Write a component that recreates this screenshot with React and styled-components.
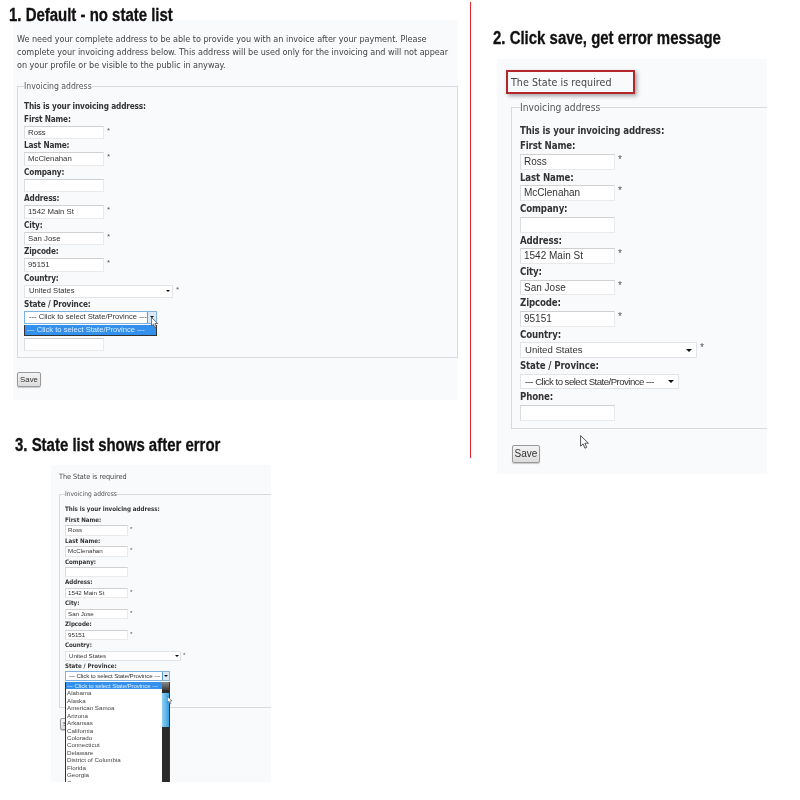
import React from 'react';
import styled, { createGlobalStyle, ThemeProvider } from 'styled-components';

const Global = createGlobalStyle`
  html, body { margin: 0; padding: 0; background: #fff; }
  * { box-sizing: border-box; }
`;

const Page = styled.div`
  display: flex;
  width: 800px;
  height: 800px;
  overflow: hidden;
`;
const LeftColumn = styled.div`
  width: 470px;
  flex: none;
  padding-top: 10px;
`;
const Divider = styled.div`
  width: 1px;
  height: 456px;
  margin-top: 2px;
  flex: none;
  background: #e0262a;
`;
const RightColumn = styled.div`
  flex: 1;
  padding-top: 33px;
  min-width: 0;
`;
const Title = styled.h2`
  margin: ${p => p.$top}px 0 0 ${p => p.$left}px;
  height: 10px;
  font: bold 17.5px/10px "Liberation Sans", Arial, sans-serif;
  color: #111;
  white-space: nowrap;
  -webkit-text-stroke: 0.3px #111;
  transform: scaleX(0.855);
  transform-origin: left center;
  position: relative;
  z-index: 1;
`;
const Panel = styled.section`
  width: ${p => p.theme.panelW}px;
  height: ${p => p.theme.panelH}px;
  margin: ${p => p.$top}px 0 0 ${p => p.$left}px;
  padding-top: ${p => p.theme.panelTop}px;
  background: #f9fafc;
  overflow: hidden;
  position: relative;
  filter: blur(${p => p.theme.blur}px);
  font-family: "DejaVu Sans Condensed", "DejaVu Sans", sans-serif;
  color: #444;
`;
const Intro = styled.p`
  margin: 0 0 0 4px;
  width: 435px;
  font-size: 9px;
  line-height: 13px;
  letter-spacing: -0.02px;
  white-space: nowrap;
`;
const ErrorBox = styled.div`
  width: 129px;
  height: 24px;
  margin-left: 9px;
  padding-left: 3px;
  font-size: 10.6px;
  line-height: 20px;
  letter-spacing: 0.05px;
  border: 2px solid #b3262c;
  box-shadow: 2px 2px 4px rgba(0, 0, 0, 0.35);
`;
const PlainError = styled.div`
  margin-left: 8px;
  font-size: 7.2px;
  line-height: 12px;
`;
const Fieldset = styled.fieldset`
  width: ${p => p.theme.fieldsetW}px;
  margin: ${p => p.theme.fieldsetTop}px 0 0 ${p => p.theme.fieldsetLeft}px;
  padding: ${p => p.theme.fieldsetPadTop}px 0 ${p => p.theme.fieldsetPadBottom}px ${p => p.theme.fieldsetPadLeft}px;
  border: 1px solid #d8dadd;
  min-width: 0;
`;
const Legend = styled.legend`
  padding: 0;
  font-size: ${p => p.theme.legend}px;
  line-height: ${p => p.theme.labelH}px;
  color: #555;
`;
const Heading = styled.div`
  font-size: ${p => p.theme.label}px;
  line-height: ${p => p.theme.labelH}px;
  height: ${p => p.theme.labelH}px;
  font-weight: bold;
  color: #333;
  white-space: nowrap;
  letter-spacing: ${p => p.theme.labelSpacing}px;
`;
const Row = styled.div`
  display: flex;
  align-items: flex-start;
  gap: ${p => p.theme.starGap}px;
  height: ${p => p.theme.fieldH}px;
  position: relative;
`;
const Star = styled.span`
  font: ${p => p.theme.field}px/${p => p.theme.fieldH * 0.8}px "Liberation Sans", sans-serif;
  color: #555;
`;
const Input = styled.div`
  width: ${p => p.theme.fieldW}px;
  height: ${p => p.theme.fieldH}px;
  padding-left: ${p => p.theme.fieldPad}px;
  background: #fff;
  border: 1px solid #e9eaec;
  border-top-color: #cfd0d2;
  border-left-color: #dcdde0;
  font: ${p => p.theme.field}px/${p => p.theme.fieldH - 2}px "Liberation Sans", Arial, sans-serif;
  color: #333;
`;
const SelectBox = styled.div`
  display: flex;
  align-items: center;
  justify-content: space-between;
  width: ${p => p.$width}px;
  height: ${p => p.theme.fieldH - (p.$open ? 1 : 0)}px;
  padding-left: ${p => p.theme.fieldPad + 1}px;
  background: #fff;
  border: 1px solid ${p => (p.$open ? '#7fb2dc' : '#e3e4e7')};
  font: ${p => p.theme.selectField}px/1 "Liberation Sans", Arial, sans-serif;
  color: #333;
  white-space: nowrap;
`;
const Placeholder = styled.span`
  letter-spacing: ${p => p.theme.placeholderSpacing}px;
`;
const ArrowCell = styled.span`
  display: flex;
  align-items: center;
  justify-content: center;
  align-self: stretch;
  width: ${p => p.theme.arrowW}px;
  flex: none;
  background: ${p => (p.$open ? '#dbe9f6' : '#fff')};
  border-left: ${p => (p.$open ? '1px solid #5c9bd0' : '0')};
`;
const Arrow = styled.span`
  width: 0;
  height: 0;
  border-left: ${p => p.theme.arrowSize}px solid transparent;
  border-right: ${p => p.theme.arrowSize}px solid transparent;
  border-top: ${p => p.theme.arrowSize}px solid #111;
`;
const Dropdown = styled.div`
  display: flex;
  position: absolute;
  z-index: 3;
  left: 0;
  top: 100%;
  width: ${p => p.$width}px;
  background: #fff;
  border: 1px solid #333;
  border-top: 0;
  font: ${p => p.theme.selectField}px/${p => p.theme.optionH}px "Liberation Sans", Arial, sans-serif;
  color: #444;
  white-space: nowrap;
`;
const OptionList = styled.div`
  flex: 1;
  min-width: 0;
`;
const Option = styled.div`
  height: ${p => p.theme.optionH}px;
  padding-left: ${p => p.theme.fieldPad - 1}px;
  background: ${p => (p.$selected ? '#3390ec' : 'transparent')};
  color: ${p => (p.$selected ? '#d8ecff' : 'inherit')};
`;
const Scrollbar = styled.div`
  display: flex;
  flex-direction: column;
  width: 7px;
  flex: none;
  background: #2b2b2b;
`;
const ScrollUp = styled.div`
  height: 8px;
  background: linear-gradient(#8a8a8a, #3a3a3a);
`;
const ScrollThumb = styled.div`
  height: 34px;
  margin-top: 3px;
  background: linear-gradient(90deg, #8fd0f5, #3b9fe0);
`;
const SaveButton = styled.div`
  display: flex;
  align-items: center;
  justify-content: center;
  width: ${p => p.theme.saveW}px;
  height: ${p => p.theme.saveH}px;
  margin: ${p => p.theme.saveTop}px 0 0 ${p => p.theme.saveLeft}px;
  background: linear-gradient(#f4f4f4, #dcdcdc);
  border: 1px solid #9a9a9a;
  border-radius: 2px;
  box-shadow: 0 1px 1px rgba(0, 0, 0, 0.2);
  font: ${p => p.theme.field}px/1 "Liberation Sans", Arial, sans-serif;
  color: #333;
`;
const Pointer = styled.svg`
  position: absolute;
  z-index: 4;
  left: ${p => p.$x}px;
  top: ${p => p.$y}px;
`;

const CursorIcon = ({ x, y, size, fill }) => (
  <Pointer $x={x} $y={y} width={size} height={size * 1.4} viewBox="0 0 10 14">
    <path
      d="M.6.6v10.6l2.5-2.3 1.8 4.3 1.8-.8-1.8-4.2h3.5z"
      fill={fill}
      stroke="#444"
      strokeWidth=".9"
      strokeLinejoin="round"
    />
  </Pointer>
);

const Required = ({ value, wide }) => (
  <Row>
    {wide ? (
      <SelectBox $width={wide}>
        {value}
        <ArrowCell><Arrow /></ArrowCell>
      </SelectBox>
    ) : (
      <Input>{value}</Input>
    )}
    <Star>*</Star>
  </Row>
);

const Field = ({ label, value, required }) => (
  <>
    <Heading>{label}</Heading>
    {required ? <Required value={value} /> : <Row><Input>{value}</Input></Row>}
  </>
);

const PLACEHOLDER = '--- Click to select State/Province ---';
const STATES = [
  'Alabama', 'Alaska', 'American Samoa', 'Arizona', 'Arkansas', 'California', 'Colorado',
  'Connecticut', 'Delaware', 'District of Columbia', 'Florida', 'Georgia', 'Guam',
];

const InvoiceForm = ({ countryW, stateW, open, states, cursor }) => (
  <Fieldset>
    <Legend>Invoicing address</Legend>
    <Heading>This is your invoicing address:</Heading>
    <Field label="First Name:" value="Ross" required />
    <Field label="Last Name:" value="McClenahan" required />
    <Field label="Company:" />
    <Field label="Address:" value="1542 Main St" required />
    <Field label="City:" value="San Jose" required />
    <Field label="Zipcode:" value="95151" required />
    <Heading>Country:</Heading>
    <Required value="United States" wide={countryW} />
    <Heading>State / Province:</Heading>
    <Row>
      <SelectBox $width={stateW} $open={open}>
        <Placeholder>{PLACEHOLDER}</Placeholder>
        <ArrowCell $open={open}><Arrow /></ArrowCell>
      </SelectBox>
      {open && (
        <Dropdown $width={stateW}>
          <OptionList>
            <Option $selected><Placeholder>{PLACEHOLDER}</Placeholder></Option>
            {states && states.map(s => <Option key={s}>{s}</Option>)}
          </OptionList>
          {states && (
            <Scrollbar>
              <ScrollUp />
              <ScrollThumb />
            </Scrollbar>
          )}
        </Dropdown>
      )}
      {cursor}
    </Row>
    {!states && <Field label={open ? '' : 'Phone:'} />}
  </Fieldset>
);

const first = {
  panelW: 445, panelH: 380, panelTop: 12.5, blur: 0.3,
  fieldsetW: 441, fieldsetTop: 8, fieldsetLeft: 4, fieldsetPadTop: 7, fieldsetPadBottom: 6, fieldsetPadLeft: 6,
  legend: 8.6, label: 8.2, labelH: 13, labelSpacing: -0.15, field: 7.8, selectField: 7.6, placeholderSpacing: 0, fieldH: 13.5, fieldW: 80, fieldPad: 3, starGap: 3,
  arrowW: 9, arrowSize: 2.5, optionH: 10, saveW: 24, saveH: 15, saveTop: 14, saveLeft: 4,
};
const second = {
  panelW: 270, panelH: 415, panelTop: 11, blur: 0.3,
  fieldsetW: 320, fieldsetTop: 6, fieldsetLeft: 14, fieldsetPadTop: 7, fieldsetPadBottom: 7.5, fieldsetPadLeft: 8,
  legend: 10.2, label: 9.6, labelH: 15.7, labelSpacing: -0.13, field: 10, selectField: 9.6, placeholderSpacing: -0.52, fieldH: 15.7, fieldW: 95, fieldPad: 3, starGap: 3,
  arrowW: 14, arrowSize: 3, optionH: 12, saveW: 28, saveH: 18, saveTop: 15.5, saveLeft: 15,
};
const third = {
  panelW: 220, panelH: 317, panelTop: 6, blur: 0.45,
  fieldsetW: 260, fieldsetTop: 6, fieldsetLeft: 8, fieldsetPadTop: 5, fieldsetPadBottom: 25, fieldsetPadLeft: 5,
  legend: 6.6, label: 6.2, labelH: 10.4, labelSpacing: -0.03, field: 6.2, selectField: 6.2, placeholderSpacing: -0.13, fieldH: 10.5, fieldW: 63, fieldPad: 2, starGap: 2,
  arrowW: 7, arrowSize: 2, optionH: 7.45, saveW: 20, saveH: 12, saveTop: 10, saveLeft: 9,
};

export default function App() {
  return (
    <Page>
      <Global />
      <LeftColumn>
        <Title $top={0} $left={9}>1. Default - no state list</Title>
        <ThemeProvider theme={first}>
          <Panel $top={0} $left={13}>
            <Intro>
              We need your complete address to be able to provide you with an invoice after your payment. Please<br />
              complete your invoicing address below. This address will be used only for the invoicing and will not appear<br />
              on your profile or be visible to the public in anyway.
            </Intro>
            <InvoiceForm
              countryW={149}
              stateW={133}
              open
              cursor={<CursorIcon x={127} y={6} size={8} fill="#fff" />}
            />
            <SaveButton>Save</SaveButton>
          </Panel>
        </ThemeProvider>
        <Title $top={40} $left={15}>3. State list shows after error</Title>
        <ThemeProvider theme={third}>
          <Panel $top={15} $left={51}>
            <PlainError>The State is required</PlainError>
            <InvoiceForm
              countryW={116}
              stateW={105}
              open
              states={STATES}
              cursor={<CursorIcon x={102} y={25} size={6} fill="#fff" />}
            />
            <SaveButton>Save</SaveButton>
          </Panel>
        </ThemeProvider>
      </LeftColumn>
      <Divider />
      <RightColumn>
        <Title $top={0} $left={22}>2. Click save, get error message</Title>
        <ThemeProvider theme={second}>
          <Panel $top={16} $left={26}>
            <ErrorBox>The State is required</ErrorBox>
            <InvoiceForm countryW={177} stateW={159} />
            <SaveButton>Save</SaveButton>
            <CursorIcon x={83} y={376} size={10} fill="#f9fafc" />
          </Panel>
        </ThemeProvider>
      </RightColumn>
    </Page>
  );
}
